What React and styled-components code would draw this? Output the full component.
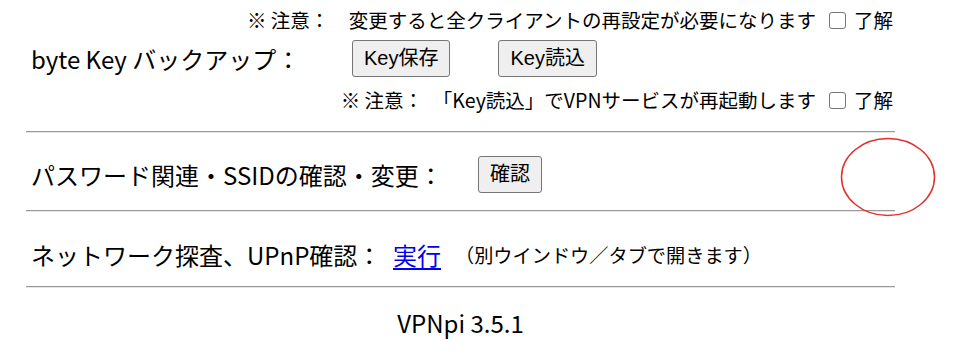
import React from "react";
import styled, { createGlobalStyle } from "styled-components";

const GlobalStyle = createGlobalStyle`
  html, body {
    margin: 0;
    padding: 0;
    background: #ffffff;
  }
  body {
    font-family: "Noto Sans CJK JP", "Noto Sans", sans-serif;
    color: #000;
  }
`;

const Page = styled.div`
  position: relative;
  width: 964px;
  height: 355px;
  overflow: hidden;
`;

const Container = styled.div`
  margin-left: 26px;
  width: 869px;
`;

const Section = styled.section`
  padding: ${(p) => p.$pad};
`;

const NoteLine = styled.div`
  display: flex;
  justify-content: flex-end;
  align-items: center;
  height: 28px;
  line-height: 28px;
  font-size: 19.5px;
  padding-right: 2px;
  margin-top: ${(p) => p.$mt || "0px"};
  white-space: pre;
`;

const Check = styled.input.attrs({ type: "checkbox" })`
  appearance: none;
  -webkit-appearance: none;
  width: 17px;
  height: 17px;
  margin: 0 8px 0 13px;
  border: 1px solid #767676;
  border-radius: 3px;
  background: #fff;
  box-sizing: border-box;
`;

const Row = styled.div`
  display: flex;
  align-items: center;
  padding-left: 5px;
  min-height: 37px;
  margin-top: ${(p) => p.$mt || "0px"};
`;

const Label = styled.div`
  flex: 0 0 ${(p) => p.$width}px;
  font-size: 24px;
  line-height: 37px;
  white-space: nowrap;
`;

const ButtonGroup = styled.div`
  display: flex;
  gap: 48px;
`;

const Button = styled.button`
  font-family: "Liberation Sans", "Noto Sans CJK JP", sans-serif;
  font-size: 20px;
  height: 37px;
  padding: 0 11px;
  color: #000;
  background: #efefef;
  border: 1px solid #767676;
  border-radius: 3px;
  line-height: 35px;
`;

const Link = styled.a`
  font-size: 24px;
  line-height: 37px;
  color: #0000ee;
  text-decoration: underline;
  text-underline-offset: 3px;
`;

const Hint = styled.span`
  font-size: 19.2px;
  margin-left: 14px;
`;

const Divider = styled.hr`
  margin: 0;
  height: 0;
  border: none;
  border-top: 1px solid #9a9a9a;
  border-bottom: 1px solid #e6e6e6;
`;

const Footer = styled.div`
  text-align: center;
  font-size: 24px;
  line-height: 37px;
  padding-top: 16px;
`;

const Annotation = styled.svg`
  position: absolute;
  left: 840px;
  top: 137px;
  width: 96px;
  height: 80px;
  pointer-events: none;
`;

export default function App() {
  return (
    <Page>
      <GlobalStyle />
      <Container>
        <Section $pad="6px 0 17px 0">
          <NoteLine>
            ※ 注意：　変更すると全クライアントの再設定が必要になります
            <Check />
            了解
          </NoteLine>
          <Row $mt="6px">
            <Label $width={321}>byte Key バックアップ：</Label>
            <ButtonGroup>
              <Button>Key保存</Button>
              <Button>Key読込</Button>
            </ButtonGroup>
          </Row>
          <NoteLine $mt="9px">
            ※ 注意：　「Key読込」でVPNサービスが再起動します
            <Check />
            了解
          </NoteLine>
        </Section>
        <Divider />
        <Section $pad="23px 0 17px 0">
          <Row>
            <Label $width={447}>パスワード関連・SSIDの確認・変更：</Label>
            <Button>確認</Button>
          </Row>
        </Section>
        <Divider />
        <Section $pad="24px 0 13px 0">
          <Row>
            <Label $width={362}>ネットワーク探査、UPnP確認：</Label>
            <Link href="#">実行</Link>
            <Hint>（別ウインドウ／タブで開きます）</Hint>
          </Row>
        </Section>
        <Divider />
        <Footer>VPNpi 3.5.1</Footer>
      </Container>
      <Annotation viewBox="0 0 96 80">
        <ellipse
          cx="48"
          cy="40"
          rx="46.5"
          ry="38.5"
          fill="none"
          stroke="#e03030"
          strokeWidth="1.5"
        />
      </Annotation>
    </Page>
  );
}
